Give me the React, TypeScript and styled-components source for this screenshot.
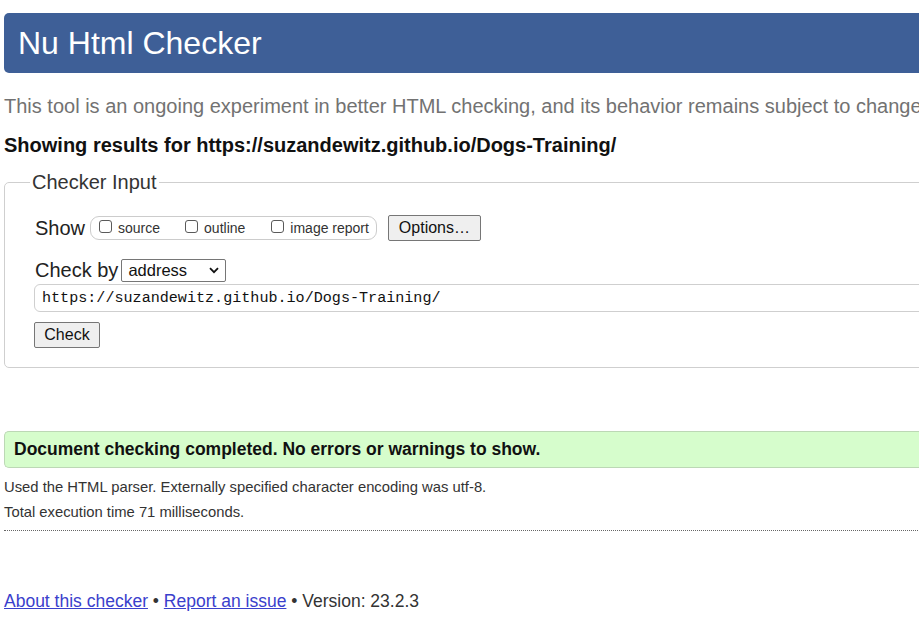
import React from "react";
import styled, { createGlobalStyle } from "styled-components";

const Global = createGlobalStyle`
  html, body { margin: 0; padding: 0; background: #fff; overflow: hidden; }
  body { font-family: "Liberation Sans", Arial, sans-serif; color: #222; }
`;

const Page = styled.div`
  width: 1100px;
  padding-left: 4px;
  padding-top: 13px;
  box-sizing: border-box;
`;

const Header = styled.h1`
  margin: 0;
  height: 60px;
  line-height: 60px;
  background: #3e5f97;
  color: #fff;
  font-size: 32px;
  font-weight: normal;
  padding-left: 14px;
  border-radius: 5px;
`;

const Intro = styled.p`
  margin: 21px 0 0;
  font-size: 20px;
  line-height: 24px;
  color: #727272;
  white-space: nowrap;
`;

const Results = styled.p`
  margin: 15px 0 0;
  font-size: 20px;
  line-height: 24px;
  font-weight: bold;
  color: #111;
`;

const Box = styled.fieldset`
  margin: 13px 0 0;
  border: 1px solid #cfcfcf;
  border-radius: 5px;
  padding: 21px 0 19px 30px;
  min-width: 0;
`;

const Legend = styled.legend`
  font-size: 20px;
  line-height: 24px;
  color: #333;
  padding: 0 2px;
  margin-left: -5px;
`;

const Row = styled.div<{ $top?: number }>`
  display: flex;
  align-items: center;
  margin-top: ${(p) => p.$top ?? 0}px;
`;

const Label = styled.span<{ $gap: number }>`
  font-size: 20px;
  line-height: 24px;
  color: #222;
  margin-right: ${(p) => p.$gap}px;
`;

const Pill = styled.div`
  display: flex;
  align-items: center;
  height: 22px;
  border: 1px solid #cccccc;
  border-radius: 9px;
  padding: 0 7px 0 8px;
  margin-right: 11px;
`;

const Option = styled.label<{ $gap?: number }>`
  display: flex;
  align-items: center;
  font-size: 14px;
  color: #333;
  margin-right: ${(p) => p.$gap ?? 0}px;
`;

const Tick = styled.input.attrs({ type: "checkbox" })`
  appearance: none;
  width: 13px;
  height: 13px;
  margin: -3px 6px 0 0;
  border: 1px solid #5a5a5a;
  border-radius: 3px;
  background: #fff;
  box-sizing: border-box;
`;

const Button = styled.button<{ $w: number }>`
  width: ${(p) => p.$w}px;
  height: 26px;
  font-family: "Liberation Sans", Arial, sans-serif;
  font-size: 16px;
  color: #111;
  background: #efefef;
  border: 1px solid #767676;
  border-radius: 2px;
  padding: 0;
`;

const SelectWrap = styled.div`
  position: relative;
  width: 105px;
  height: 23px;
`;

const Select = styled.select`
  appearance: none;
  width: 100%;
  height: 100%;
  font-family: "Liberation Sans", Arial, sans-serif;
  font-size: 16.5px;
  color: #111;
  background: #fff;
  border: 1px solid #767676;
  border-radius: 2px;
  padding: 0 0 0 6px;
  margin: 0;
`;

const Chevron = styled.svg`
  position: absolute;
  right: 7px;
  top: 8px;
  pointer-events: none;
`;

const UrlInput = styled.input`
  display: block;
  width: calc(100% + 1px);
  box-sizing: border-box;
  height: 28px;
  margin: 2px 0 0 -1px;
  border: 1px solid #cfcfcf;
  border-radius: 6px;
  padding: 0 0 0 7px;
  font-family: "Liberation Mono", "DejaVu Sans Mono", monospace;
  font-size: 15.1px;
  color: #111;
  background: #fff;
`;

const CheckRow = styled.div`
  margin: 10px 0 0 -1px;
`;

const Success = styled.div`
  margin-top: 63px;
  height: 35px;
  line-height: 35px;
  background: #d6fdcc;
  border: 1px solid #bcd8b5;
  border-right: none;
  border-radius: 5px 0 0 5px;
  padding-left: 9px;
  font-size: 17.5px;
  font-weight: bold;
  color: #111;
`;

const Note = styled.p<{ $top: number }>`
  margin: ${(p) => p.$top}px 0 0;
  font-size: 14.8px;
  line-height: 20px;
  color: #333;
`;

const Rule = styled.hr`
  margin: 8px 0 0;
  border: none;
  border-top: 1px dotted #666;
  height: 0;
`;

const Footer = styled.p`
  margin: 58px 0 0;
  font-size: 17.5px;
  line-height: 24px;
  color: #333;
`;

const Link = styled.a`
  color: #3a40cc;
  text-decoration: underline;
`;

export default function App() {
  return (
    <>
      <Global />
      <Page>
        <Header>Nu Html Checker</Header>
        <Intro>
          This tool is an ongoing experiment in better HTML checking, and its behavior remains subject to change.
        </Intro>
        <Results>Showing results for https://suzandewitz.github.io/Dogs-Training/</Results>
        <Box>
          <Legend>Checker Input</Legend>
          <Row>
            <Label $gap={5}>Show</Label>
            <Pill>
              <Option $gap={25}>
                <Tick />
                source
              </Option>
              <Option $gap={26}>
                <Tick />
                outline
              </Option>
              <Option>
                <Tick />
                image report
              </Option>
            </Pill>
            <Button $w={93}>Options…</Button>
          </Row>
          <Row $top={17}>
            <Label $gap={3}>Check by</Label>
            <SelectWrap>
              <Select defaultValue="address">
                <option value="address">address</option>
                <option value="file">file upload</option>
                <option value="text">text input</option>
              </Select>
              <Chevron width="10" height="7" viewBox="0 0 10 7">
                <path d="M1 1.2 L5 5.2 L9 1.2" fill="none" stroke="#111" strokeWidth="1.8" />
              </Chevron>
            </SelectWrap>
          </Row>
          <UrlInput defaultValue="https://suzandewitz.github.io/Dogs-Training/" />
          <CheckRow>
            <Button $w={66}>Check</Button>
          </CheckRow>
        </Box>
        <Success>Document checking completed. No errors or warnings to show.</Success>
        <Note $top={9}>Used the HTML parser. Externally specified character encoding was utf-8.</Note>
        <Note $top={5}>Total execution time 71 milliseconds.</Note>
        <Rule />
        <Footer>
          <Link href="#">About this checker</Link> • <Link href="#">Report an issue</Link> • Version: 23.2.3
        </Footer>
      </Page>
    </>
  );
}
